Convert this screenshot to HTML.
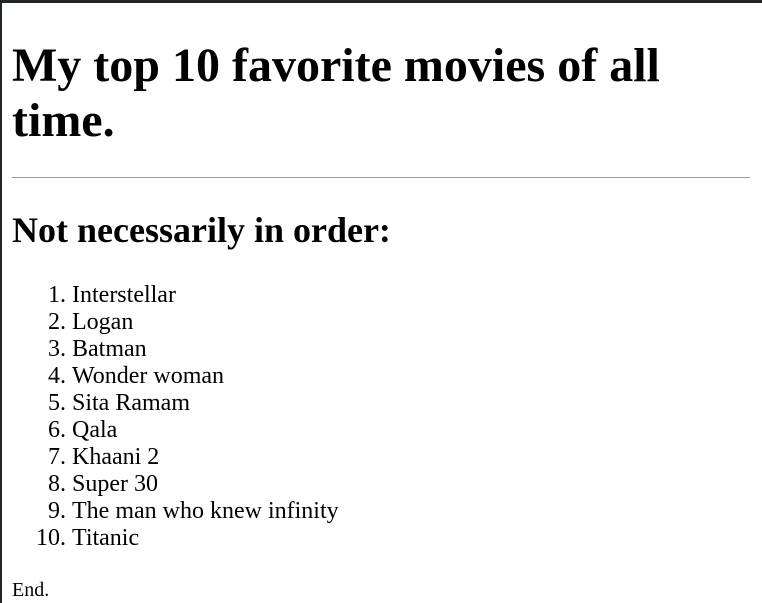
<!DOCTYPE html>
<html><head><style>
html,body{margin:0;padding:0;background:#fff}
body{width:762px;height:603px;overflow:hidden;border-top:3px solid #22262b;box-sizing:border-box;font-family:"Liberation Serif",serif;color:#000}
.w{border-left:2px solid #22262b;padding-left:10px;padding-right:12px;height:600px;box-sizing:border-box}
h1{font-size:48px;line-height:55px;margin:0;padding-top:35px;font-weight:bold}
hr{border:0;border-top:1px solid #9a9a9a;margin:29px 0 0 0;height:0}
h2{font-size:36px;line-height:41px;margin:32px 0 0 0}
ol{font-size:24px;line-height:27px;margin:31px 0 0 0;padding-left:60px}
p{font-size:20px;line-height:23px;margin:27px 0 0 0}
</style></head><body><div class="w">
<h1>My top 10 favorite movies of all time.</h1>
<hr>
<h2>Not necessarily in order:</h2>
<ol>
<li>Interstellar</li><li>Logan</li><li>Batman</li><li>Wonder woman</li><li>Sita Ramam</li><li>Qala</li><li>Khaani 2</li><li>Super 30</li><li>The man who knew infinity</li><li>Titanic</li>
</ol>
<p>End.</p>
</div></body></html>
